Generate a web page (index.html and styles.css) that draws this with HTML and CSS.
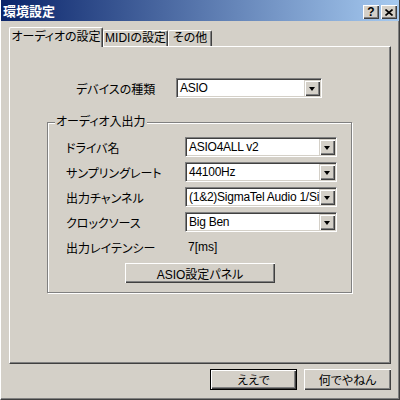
FILE: index.html
```html
<!DOCTYPE html>
<html lang="ja">
<head>
    <meta charset="UTF-8">
    <title>環境設定</title>
    <link rel="stylesheet" href="styles.css">
</head>
<body>
    <div class="window">
        <div class="titlebar">
            <span class="caption">環境設定</span>
            <div class="caption-btns">
                <div class="cap-btn help">?</div>
                <div class="cap-btn">
                    <svg width="8" height="7" viewBox="0 0 8 7"><path d="M0.5 0.5 L7.5 6.5 M7.5 0.5 L0.5 6.5" stroke="#000" stroke-width="1.6"/></svg>
                </div>
            </div>
        </div>

        <div class="dialog">
            <div class="tabs">
                <div class="tab active tab-audio">オーディオの設定</div>
                <div class="tab tab-midi">MIDIの設定</div>
                <div class="tab tab-other">その他</div>
            </div>

            <div class="panel">
                <div class="device-row">
                    <span class="device-label">デバイスの種類</span>
                    <div class="combo combo-device">
                        <span class="combo-text">ASIO</span>
                        <span class="combo-btn"><i class="arrow"></i></span>
                    </div>
                </div>

                <div class="group">
                    <div class="group-title">オーディオ入出力</div>
                    <div class="group-grid">
                        <span>ドライバ名</span>
                        <div class="combo">
                            <span class="combo-text">ASIO4ALL v2</span>
                            <span class="combo-btn"><i class="arrow"></i></span>
                        </div>

                        <span>サンプリングレート</span>
                        <div class="combo">
                            <span class="combo-text">44100Hz</span>
                            <span class="combo-btn"><i class="arrow"></i></span>
                        </div>

                        <span>出力チャンネル</span>
                        <div class="combo">
                            <span class="combo-text">(1&amp;2)SigmaTel Audio 1/Si</span>
                            <span class="combo-btn"><i class="arrow"></i></span>
                        </div>

                        <span>クロックソース</span>
                        <div class="combo">
                            <span class="combo-text">Big Ben</span>
                            <span class="combo-btn"><i class="arrow"></i></span>
                        </div>

                        <span>出力レイテンシー</span>
                        <span class="latency">7[ms]</span>
                    </div>
                    <div class="btn panel-btn">ASIO設定パネル</div>
                </div>
            </div>

            <div class="actions">
                <div class="btn default">ええで</div>
                <div class="btn">何でやねん</div>
            </div>
        </div>
    </div>
</body>
</html>
```

FILE: styles.css
```css
body {
    margin: 0;
    padding: 0;
    background-color: #d4d0c8;
    font-family: "Liberation Sans", "Noto Sans CJK JP", sans-serif;
    font-size: 12px;
    font-feature-settings: "palt";
    color: #000;
}
.window {
    width: 400px;
    height: 400px;
    box-sizing: border-box;
    background-color: #d4d0c8;
    border-left: 1px solid #fff;
    border-right: 1px solid #404040;
    border-bottom: 1px solid #404040;
    box-shadow: inset -1px -1px #808080;
}
.titlebar {
    height: 21px;
    display: flex;
    align-items: center;
    padding: 0 2px 0 2px;
    background: linear-gradient(to right, #0a246a, #a6caf0);
}
.caption {
    color: #fff;
    font-weight: bold;
    font-size: 13px;
    font-family: "Noto Sans CJK JP", sans-serif;
}
.caption-btns {
    margin-left: auto;
    display: flex;
    gap: 2px;
    margin-top: 3px;
}
.cap-btn {
    width: 16px;
    height: 14px;
    box-sizing: border-box;
    display: flex;
    align-items: center;
    justify-content: center;
    background-color: #d4d0c8;
    box-shadow: inset 1px 1px #fff, inset -1px -1px #404040, inset -2px -2px #808080;
}
.cap-btn.help {
    font-weight: bold;
    font-size: 12px;
    line-height: 14px;
}

.dialog {
    padding: 6px 8px 0 8px;
}
.tabs {
    display: flex;
    align-items: flex-end;
    height: 19px;
}
.tab {
    box-sizing: border-box;
    height: 16px;
    line-height: 15px;
    text-align: center;
    border: 1px solid;
    border-color: #fff #404040 transparent #fff;
    border-bottom: none;
    border-radius: 2px 2px 0 0;
    box-shadow: inset -1px 0 #808080;
    white-space: nowrap;
}
.tab.active {
    position: relative;
    z-index: 1;
    height: 20px;
    line-height: 18px;
    margin-bottom: -1px;
    background-color: #d4d0c8;
}
.tab-audio { width: 94px; }
.tab-midi { width: 65px; }
.tab-other { width: 44px; }

.panel {
    height: 318px;
    box-sizing: border-box;
    border: 1px solid;
    border-color: #fff #404040 #404040 #fff;
    box-shadow: inset -1px -1px #808080;
}
.device-row {
    display: flex;
    align-items: center;
    margin: 31px 0 0 66px;
}
.device-label {
    width: 100px;
}
.combo {
    height: 20px;
    box-sizing: border-box;
    display: flex;
    align-items: stretch;
    background-color: #fff;
    border: 1px solid;
    border-color: #808080 #fff #fff #808080;
    box-shadow: inset 1px 1px #404040, inset -1px -1px #d4d0c8;
    padding: 1px;
}
.combo-device {
    width: 146px;
}
.combo-text {
    flex: 1;
    overflow: hidden;
    white-space: nowrap;
    padding-left: 2px;
    line-height: 16px;
    letter-spacing: -0.25px;
}
.combo-btn {
    width: 16px;
    display: flex;
    align-items: center;
    justify-content: center;
    background-color: #d4d0c8;
    box-shadow: inset 1px 1px #d4d0c8, inset 2px 2px #fff, inset -1px -1px #404040, inset -2px -2px #808080;
}
.arrow {
    width: 0;
    height: 0;
    border-left: 3.5px solid transparent;
    border-right: 3.5px solid transparent;
    border-top: 4px solid #000;
    margin-top: 1px;
}

.group {
    width: 305px;
    height: 171px;
    box-sizing: border-box;
    margin: 24px 0 0 37px;
    border: 1px solid #808080;
    box-shadow: 1px 1px #fff, inset 1px 1px #fff;
}
.group-title {
    width: fit-content;
    margin: -8px 0 0 7px;
    padding: 0 1px;
    line-height: 14px;
    background-color: #d4d0c8;
}
.group-grid {
    display: grid;
    grid-template-columns: 119px 152px;
    grid-auto-rows: 20px;
    row-gap: 5px;
    align-items: center;
    margin: 8px 0 0 18px;
}
.group-grid .combo {
    align-self: stretch;
}
.latency {
    padding-left: 3px;
}

.btn {
    box-sizing: border-box;
    height: 21px;
    display: flex;
    align-items: center;
    justify-content: center;
    background-color: #d4d0c8;
    box-shadow: inset 1px 1px #fff, inset -1px -1px #404040, inset -2px -2px #808080;
}
.panel-btn {
    width: 150px;
    height: 20px;
    margin: 6px 0 0 77px;
}
.actions {
    display: flex;
    justify-content: flex-end;
    gap: 7px;
    margin-top: 5px;
}
.actions .btn {
    width: 87px;
}
.btn.default {
    border: 1px solid #000;
    box-shadow: inset 1px 1px #fff, inset -1px -1px #404040, inset -2px -2px #808080;
}
```
